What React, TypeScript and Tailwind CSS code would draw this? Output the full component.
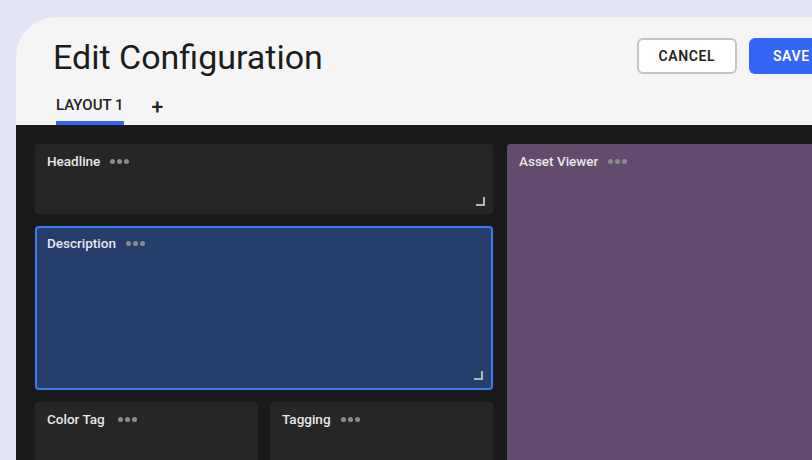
import React from 'react';

// ----------------------------------------------------------------------

const Dots: React.FC = () => (
  <span className="flex items-center gap-[2px]">
    <span className="h-[5px] w-[5px] rounded-full bg-[#8c8c8c]" />
    <span className="h-[5px] w-[5px] rounded-full bg-[#8c8c8c]" />
    <span className="h-[5px] w-[5px] rounded-full bg-[#8c8c8c]" />
  </span>
);

const ResizeHandle: React.FC = () => (
  <svg width="10" height="10" viewBox="0 0 10 10" className="absolute bottom-[8px] right-[8px]">
    <path d="M1 9H9V1" fill="none" stroke="#b3b3b3" strokeWidth="2" />
  </svg>
);

type WidgetProps = {
  title: string;
  className: string;
  gap?: string;
  resize?: boolean;
};

const Widget: React.FC<WidgetProps> = ({ title, className, gap = 'gap-[10px]', resize }) => (
  <div className={`relative rounded-[4px] ${className}`}>
    <div className={`flex items-center ${gap} text-[13.5px] font-medium leading-4 text-[#e8e8e8]`}>
      <span>{title}</span>
      <Dots />
    </div>
    {resize && <ResizeHandle />}
  </div>
);

const App: React.FC = () => {
  return (
    <div className="h-[460px] w-[812px] overflow-hidden bg-[#e3e4f6] pl-[16px] pt-[17px] font-['Roboto',sans-serif]">
      <div className="flex h-[460px] w-[900px] flex-col overflow-hidden rounded-tl-[40px] bg-[#f5f5f5]">
        {/* header */}
        <div className="flex h-[108px] shrink-0 flex-col pl-[37px]">
          <div className="flex items-start">
            <h1 className="mt-[20px] text-[34px] font-normal leading-[40px] text-[#1c1c1c]">Edit Configuration</h1>
            <div className="ml-[314px] mt-[21px] flex gap-[12px]">
              <button className="h-[36px] w-[100px] rounded-[6px] border-2 border-[#c4c4c4] bg-white text-[14px] font-semibold tracking-[0.6px] text-[#222]">
                CANCEL
              </button>
              <button className="h-[36px] rounded-[6px] bg-[#3366f5] px-[24px] text-[14px] font-semibold tracking-[0.6px] text-white">
                SAVE
              </button>
            </div>
          </div>
          <div className="mt-auto flex items-end gap-[28px] pl-[3px]">
            <div className="flex flex-col">
              <span className="text-[15px] font-medium leading-4 text-[#222]">LAYOUT 1</span>
              <span className="mt-[8px] h-[4px] bg-[#3366f5]" />
            </div>
            <span className="mb-[8px] text-[21px] font-medium leading-5 text-[#222]">+</span>
          </div>
        </div>

        {/* layout canvas */}
        <div className="flex flex-1 gap-[14px] bg-[#1a1a1a] pl-[19px] pt-[19px]">
          <div className="flex w-[458px] flex-col gap-[12px]">
            <Widget title="Headline" resize className="h-[70px] bg-[#262626] px-[12px] pt-[9px]" />
            <Widget
              title="Description"
              resize
              className="h-[164px] border-2 border-[#3a7bf0] bg-[#253e6a] px-[10px] pt-[7px]"
            />
            <div className="flex gap-[12px]">
              <Widget title="Color Tag" gap="gap-[13px]" className="h-[80px] flex-1 bg-[#262626] px-[12px] pt-[9px]" />
              <Widget title="Tagging" className="h-[80px] flex-1 bg-[#262626] px-[12px] pt-[9px]" />
            </div>
          </div>
          <Widget title="Asset Viewer" className="h-[400px] flex-1 bg-[#634b6d] px-[12px] pt-[9px]" />
        </div>
      </div>
    </div>
  );
};

export default App;
